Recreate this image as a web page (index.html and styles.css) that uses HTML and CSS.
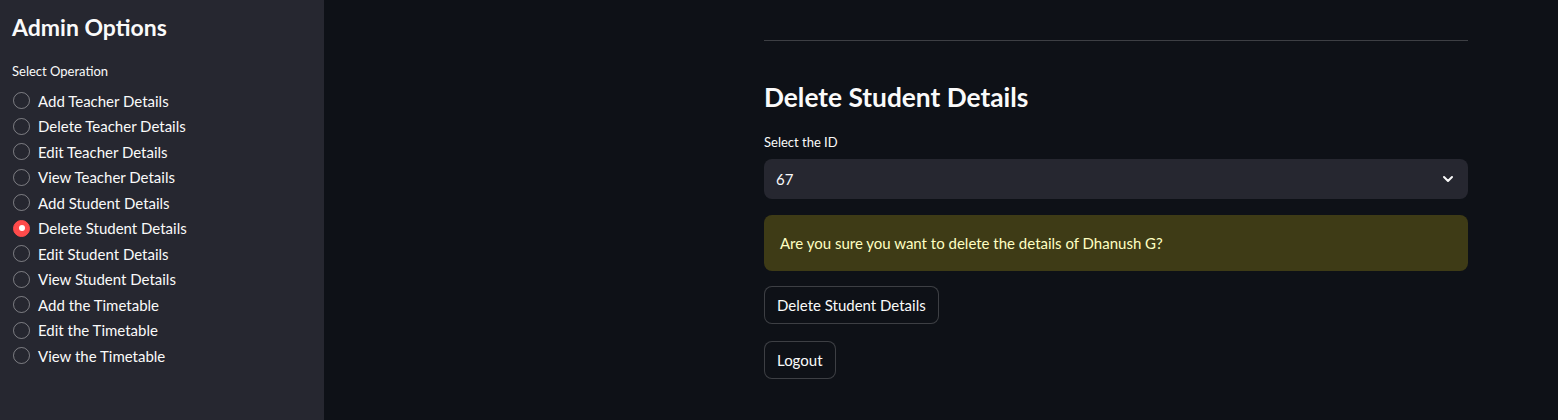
FILE: index.html
```html
<!DOCTYPE html>
<html>
<head>
<meta charset="utf-8">
<link rel="stylesheet" href="styles.css">
</head>
<body>
<div class="app">
  <aside class="sidebar">
    <h2 class="side-title">Admin Options</h2>
    <div class="field-label">Select Operation</div>
    <div class="radio-group">
      <label class="radio"><span class="dot"></span>Add Teacher Details</label>
      <label class="radio"><span class="dot"></span>Delete Teacher Details</label>
      <label class="radio"><span class="dot"></span>Edit Teacher Details</label>
      <label class="radio"><span class="dot"></span>View Teacher Details</label>
      <label class="radio"><span class="dot"></span>Add Student Details</label>
      <label class="radio checked"><span class="dot"></span>Delete Student Details</label>
      <label class="radio"><span class="dot"></span>Edit Student Details</label>
      <label class="radio"><span class="dot"></span>View Student Details</label>
      <label class="radio"><span class="dot"></span>Add the Timetable</label>
      <label class="radio"><span class="dot"></span>Edit the Timetable</label>
      <label class="radio"><span class="dot"></span>View the Timetable</label>
    </div>
  </aside>
  <main class="main">
    <div class="content">
      <hr class="rule">
      <h2 class="page-title">Delete Student Details</h2>
      <div class="field-label">Select the ID</div>
      <div class="select">
        <span>67</span>
        <svg class="chev" width="16" height="16" viewBox="0 0 16 16"><path d="M4 6l4 4 4-4" fill="none" stroke="#fafafa" stroke-width="2" stroke-linecap="round" stroke-linejoin="round"/></svg>
      </div>
      <div class="warning">Are you sure you want to delete the details of Dhanush G?</div>
      <button class="btn">Delete Student Details</button>
      <button class="btn">Logout</button>
    </div>
  </main>
</div>
</body>
</html>
```
FILE: styles.css
```css
* { box-sizing: border-box; }
html, body { margin: 0; padding: 0; }
body {
  background: #0e1117;
  color: #fafafa;
  font-family: Lato, "Noto Sans", sans-serif;
  width: 1558px;
  height: 420px;
  overflow: hidden;
}
.app { display: flex; height: 420px; }
.sidebar {
  width: 324px;
  flex: 0 0 324px;
  background: #262730;
  padding: 13px 12px 0 12px;
}
.side-title {
  margin: 0;
  font-size: 23px;
  font-weight: 700;
  line-height: 28px;
}
.field-label {
  font-size: 13px;
  line-height: 16px;
  color: #fafafa;
}
.sidebar .field-label { margin-top: 22px; }
.radio-group {
  display: flex;
  flex-direction: column;
  margin-top: 9px;
}
.radio {
  display: flex;
  align-items: center;
  height: 25.5px;
  font-size: 15px;
  gap: 8px;
}
.dot {
  width: 17px;
  height: 17px;
  border-radius: 50%;
  border: 1px solid rgba(250,250,250,0.4);
  margin-left: 1px;
  position: relative;
}
.radio.checked .dot {
  background: #ff4b4b;
  border-color: #ff4b4b;
}
.radio.checked .dot::after {
  content: "";
  position: absolute;
  width: 6px; height: 6px;
  border-radius: 50%;
  background: #fff;
  left: 4.5px; top: 4.5px;
}
.main { flex: 1; padding-left: 440px; }
.content {
  width: 704px;
  display: flex;
  flex-direction: column;
  align-items: flex-start;
}
.rule {
  width: 100%;
  margin: 40px 0 0 0;
  border: none;
  border-top: 1px solid rgba(250,250,250,0.2);
}
.page-title {
  margin: 39px 0 0 0;
  font-size: 26.3px;
  font-weight: 700;
  line-height: 34px;
}
.content .field-label { margin-top: 20px; }
.select {
  width: 100%;
  height: 40px;
  margin-top: 9px;
  background: #262730;
  border-radius: 8px;
  display: flex;
  align-items: center;
  justify-content: space-between;
  padding: 0 12px;
  font-size: 15px;
}
.warning {
  width: 100%;
  margin-top: 16px;
  height: 56px;
  background: #3e3b16;
  color: #ffffc2;
  border-radius: 8px;
  padding: 0 16px;
  display: flex;
  align-items: center;
  font-size: 15px;
}
.btn {
  margin-top: 15px;
  height: 38px;
  padding: 0 12px;
  background: #0e1117;
  color: #fafafa;
  border: 1px solid rgba(250,250,250,0.2);
  border-radius: 8px;
  font-family: inherit;
  font-size: 15px;
}
.btn + .btn { margin-top: 17px; }
```
